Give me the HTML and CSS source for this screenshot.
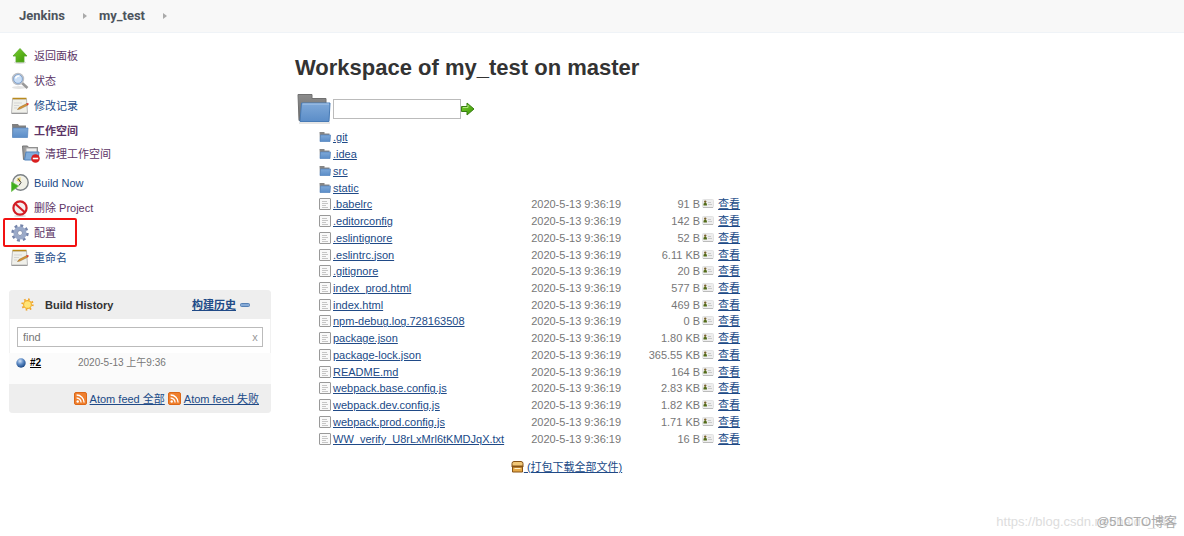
FILE: index.html
```html
<!DOCTYPE html>
<html lang="zh-CN">
<head>
<meta charset="utf-8">
<title>my_test - Jenkins</title>
<link rel="stylesheet" href="styles.css">
</head>
<body>
<svg class="defs" width="0" height="0" aria-hidden="true">
  <defs>
    <linearGradient id="blue" x1="0" y1="0" x2="0" y2="1"><stop offset="0" stop-color="#7fa9d8"/><stop offset="1" stop-color="#5b8dc8"/></linearGradient>
    <linearGradient id="grey" x1="0" y1="0" x2="0" y2="1"><stop offset="0" stop-color="#8c8c8c"/><stop offset="1" stop-color="#6b6b6b"/></linearGradient>
    <linearGradient id="green" x1="0" y1="0" x2="1" y2="1"><stop offset="0" stop-color="#7bd030"/><stop offset="1" stop-color="#3c9606"/></linearGradient>
    <radialGradient id="ball" cx=".4" cy=".3" r=".7"><stop offset="0" stop-color="#d4e4f8"/><stop offset=".5" stop-color="#5b89c4"/><stop offset="1" stop-color="#1d4a86"/></radialGradient>
    <symbol id="folder" viewBox="0 0 34 32"><path d="M1 1.500h14v4h14v22H2z" fill="url(#grey)" stroke="#707070"/><path d="M4.500 10h28.500l-1 18.500H3z" fill="url(#blue)" stroke="#477ab5"/><path d="M5.500 11h26.500" stroke="#a9c7ea"/><path d="M2 30h31" stroke="#ccc"/></symbol>
    <symbol id="notepad" viewBox="0 0 18 18"><path d="M1.500 2h14l1 14H.5z" fill="#f0f0ea" stroke="#bbb"/><path d="M1.500 1.500h14" stroke="#b98a1d" stroke-width="1.500"/><path d="M3 6h8M3 8.500h5M3 11h3" stroke="#d5d5d5"/><path d="M.5 16.500h16" stroke="#999"/><path d="M6.500 12.500l1.500-2 8-4 .8 1.600-8 4z" fill="#e09a35" stroke="#83591b" stroke-width=".5"/><path d="M15.500 6.500l1.800-.5.4 1.500-1.300.7z" fill="#d33"/></symbol>
    <symbol id="smallfolder" viewBox="0 0 12 12"><path d="M.5 1h5v1.500h5V10H1z" fill="#858585"/><path d="M1.500 4h10l-.5 6.500H1z" fill="url(#blue)" stroke="#5283bd" stroke-width=".7"/></symbol>
    <symbol id="doc" viewBox="0 0 12 12"><rect x=".5" y=".5" width="11" height="11" rx=".5" fill="#f9f9f9" stroke="#999"/><path d="M3 3.500h5M3 5.500h6M3 7.500h4M3 9.500h6" stroke="#c5c5c5"/></symbol>
    <symbol id="card" viewBox="0 0 12 9"><rect x=".5" y=".5" width="11" height="8" rx="1" fill="#eee" stroke="#e2e2e2"/><path d="M1 8.500h10" stroke="#bbb"/><circle cx="3.200" cy="2.600" r="1.200" fill="#7a612c"/><path d="M1.500 6.500V4.800l1.700-1.500 1.700 1.500v1.700z" fill="#526b18"/><path d="M6 3.500h3M6 5.500h4" stroke="#bbb" stroke-width=".7"/></symbol>
    <symbol id="rss" viewBox="0 0 13 13"><rect x=".5" y=".5" width="12" height="12" rx="1.500" fill="#ef7f2e" stroke="#dc6818"/><circle cx="3.700" cy="9.500" r="1.200" fill="#fff"/><path d="M2.600 6a4.500 4.500 0 0 1 4.500 4.500M2.600 3a7.500 7.500 0 0 1 7.500 7.500" fill="none" stroke="#fff" stroke-width="1.300"/></symbol>
  </defs>
</svg>

<header class="crumbs">
  <a href="#">Jenkins</a><svg class="chev" viewBox="0 0 4 6"><path d="M0 0l4 3-4 3z"/></svg>
  <a href="#">my_test</a><svg class="chev" viewBox="0 0 4 6"><path d="M0 0l4 3-4 3z"/></svg>
</header>

<div class="page">
  <aside class="side">
    <nav class="tasks">
      <a class="task visited" href="#"><svg viewBox="0 0 18 18"><ellipse cx="9" cy="15.500" rx="6" ry="1.500" fill="#ddd"/><path d="M9 1.500l7 7.500h-3v6H5V9H2z" fill="url(#green)" stroke="#58a828" stroke-width=".8"/></svg>返回面板</a>
      <a class="task visited" href="#"><svg viewBox="0 0 18 18"><ellipse cx="8" cy="15.500" rx="7" ry="1.500" fill="#e3e3e3"/><path d="M11 11l5.500 5" stroke="#999" stroke-width="2.600"/><circle cx="7" cy="7" r="5.300" fill="#c9def6" stroke="#bcbfc5" stroke-width="1.800"/><circle cx="7" cy="7" r="4.400" fill="none" stroke="#729cd0" stroke-width=".8"/><path d="M4.500 6.500q1-3 4-2.500" stroke="#fff" stroke-width="1.500" fill="none"/></svg>状态</a>
      <a class="task" href="#"><svg viewBox="0 0 18 18"><use href="#notepad"/></svg>修改记录</a>
      <a class="task visited current" href="#"><svg viewBox="0 0 18 18"><path d="M1 2h6l1 1.500h7v11H1.500z" fill="#808080"/><path d="M2 6h15l-.5 9.500H1.500z" fill="url(#blue)" stroke="#5283bd" stroke-width=".7"/></svg>工作空间</a>
      <a class="task visited sub" href="#"><svg viewBox="0 0 18 18"><path d="M.5 1h5l1 1.500h9v12H1.500z" fill="#9a9a9a" stroke="#777"/><path d="M4 3h11v7H4z" fill="#eee" stroke="#aaa"/><path d="M4 7h13l-1 8H2.500z" fill="#80acdb" stroke="#5484bb"/><circle cx="13.500" cy="13.500" r="4.300" fill="#d91f20"/><path d="M10.800 13.500h5.400" stroke="#fff" stroke-width="1.600"/></svg>清理工作空间</a>
      <a class="task" href="#"><svg viewBox="0 0 18 18"><circle cx="9.500" cy="8.500" r="7.700" fill="#f1f1e7" stroke="#7c8286" stroke-width="1.400"/><path d="M9.500 3v5.500l-4-2q1-3 4-3.500z" fill="#ecd067"/><path d="M7 4.500l3 4-2 3" stroke="#444" fill="none"/><path d="M.5 8l7 4-7 5.500z" fill="#3fae1c" stroke="#6cc04c" stroke-width=".7"/></svg>Build Now</a>
      <a class="task visited" href="#"><svg viewBox="0 0 18 18"><ellipse cx="9" cy="17" rx="6" ry="1" fill="#ddd"/><circle cx="9" cy="9" r="6.600" fill="#f5eded" stroke="#d31c24" stroke-width="2.200"/><path d="M4.500 5l9 8" stroke="#d31c24" stroke-width="2.200"/></svg>删除 Project</a>
      <a class="task visited marked" href="#"><svg viewBox="0 0 18 18"><circle cx="9" cy="9" r="7.200" fill="none" stroke="#7484aa" stroke-width="3" stroke-dasharray="2.830"/><circle cx="9" cy="9" r="4.600" fill="none" stroke="#9aa9c8" stroke-width="4"/><circle cx="9" cy="9" r="2.500" fill="#fff" stroke="#6b7b9f" stroke-width=".8"/></svg>配置</a>
      <a class="task" href="#"><svg viewBox="0 0 18 18"><use href="#notepad"/></svg>重命名</a>
    </nav>

    <section class="history">
      <div class="history-head">
        <svg class="sun" viewBox="0 0 12 12"><circle cx="6" cy="6" r="4.800" fill="none" stroke="#f0a52b" stroke-width="1.800" stroke-dasharray="1.500 2.270"/><circle cx="6" cy="6" r="3.600" fill="#ffe478" stroke="#f0ad2c"/></svg>
        <h2>Build History</h2>
        <a class="trend" href="#">构建历史</a>
        <svg class="minus" viewBox="0 0 10 4"><rect x=".5" y=".5" width="9" height="3" rx="1" fill="#86aad6" stroke="#5681b5"/></svg>
      </div>
      <div class="find">
        <input type="text" placeholder="find" aria-label="find"><button type="button" aria-label="clear">x</button>
      </div>
      <div class="build">
        <svg viewBox="0 0 10 10"><circle cx="5" cy="5" r="4.700" fill="url(#ball)"/></svg>
        <a href="#">#2</a><span>2020-5-13 上午9:36</span>
      </div>
      <div class="feeds">
        <svg viewBox="0 0 13 13"><use href="#rss"/></svg><a href="#">Atom feed 全部</a>
        <svg viewBox="0 0 13 13"><use href="#rss"/></svg><a href="#">Atom feed 失败</a>
      </div>
    </section>
  </aside>

  <main class="main">
    <h1>Workspace of my_test on master</h1>
    <form class="path">
      <svg class="big" viewBox="0 0 34 32"><use href="#folder"/></svg>
      <input type="text" aria-label="path">
      <button type="button" aria-label="go"><svg viewBox="0 0 14 14"><path d="M.5 4.500H6V1l7 6-7 6V9.500H.5z" fill="url(#green)" stroke="#387e13"/><path d="M2 5.500h5V3" fill="none" stroke="#b0e57e"/></svg></button>
    </form>
    <div class="listing">
    <table class="files">
      <tr><td><svg viewBox="0 0 12 12"><use href="#smallfolder"/></svg></td><td colspan="4"><a href="#">.git</a></td></tr>
      <tr><td><svg viewBox="0 0 12 12"><use href="#smallfolder"/></svg></td><td colspan="4"><a href="#">.idea</a></td></tr>
      <tr><td><svg viewBox="0 0 12 12"><use href="#smallfolder"/></svg></td><td colspan="4"><a href="#">src</a></td></tr>
      <tr><td><svg viewBox="0 0 12 12"><use href="#smallfolder"/></svg></td><td colspan="4"><a href="#">static</a></td></tr>
      <tr><td><svg viewBox="0 0 12 12"><use href="#doc"/></svg></td><td><a href="#">.babelrc</a></td><td class="date">2020-5-13 9:36:19</td><td class="size">91 B</td><td class="view"><svg viewBox="0 0 12 9"><use href="#card"/></svg><a href="#">查看</a></td></tr>
      <tr><td><svg viewBox="0 0 12 12"><use href="#doc"/></svg></td><td><a href="#">.editorconfig</a></td><td class="date">2020-5-13 9:36:19</td><td class="size">142 B</td><td class="view"><svg viewBox="0 0 12 9"><use href="#card"/></svg><a href="#">查看</a></td></tr>
      <tr><td><svg viewBox="0 0 12 12"><use href="#doc"/></svg></td><td><a href="#">.eslintignore</a></td><td class="date">2020-5-13 9:36:19</td><td class="size">52 B</td><td class="view"><svg viewBox="0 0 12 9"><use href="#card"/></svg><a href="#">查看</a></td></tr>
      <tr><td><svg viewBox="0 0 12 12"><use href="#doc"/></svg></td><td><a href="#">.eslintrc.json</a></td><td class="date">2020-5-13 9:36:19</td><td class="size">6.11 KB</td><td class="view"><svg viewBox="0 0 12 9"><use href="#card"/></svg><a href="#">查看</a></td></tr>
      <tr><td><svg viewBox="0 0 12 12"><use href="#doc"/></svg></td><td><a href="#">.gitignore</a></td><td class="date">2020-5-13 9:36:19</td><td class="size">20 B</td><td class="view"><svg viewBox="0 0 12 9"><use href="#card"/></svg><a href="#">查看</a></td></tr>
      <tr><td><svg viewBox="0 0 12 12"><use href="#doc"/></svg></td><td><a href="#">index_prod.html</a></td><td class="date">2020-5-13 9:36:19</td><td class="size">577 B</td><td class="view"><svg viewBox="0 0 12 9"><use href="#card"/></svg><a href="#">查看</a></td></tr>
      <tr><td><svg viewBox="0 0 12 12"><use href="#doc"/></svg></td><td><a href="#">index.html</a></td><td class="date">2020-5-13 9:36:19</td><td class="size">469 B</td><td class="view"><svg viewBox="0 0 12 9"><use href="#card"/></svg><a href="#">查看</a></td></tr>
      <tr><td><svg viewBox="0 0 12 12"><use href="#doc"/></svg></td><td><a href="#">npm-debug.log.728163508</a></td><td class="date">2020-5-13 9:36:19</td><td class="size">0 B</td><td class="view"><svg viewBox="0 0 12 9"><use href="#card"/></svg><a href="#">查看</a></td></tr>
      <tr><td><svg viewBox="0 0 12 12"><use href="#doc"/></svg></td><td><a href="#">package.json</a></td><td class="date">2020-5-13 9:36:19</td><td class="size">1.80 KB</td><td class="view"><svg viewBox="0 0 12 9"><use href="#card"/></svg><a href="#">查看</a></td></tr>
      <tr><td><svg viewBox="0 0 12 12"><use href="#doc"/></svg></td><td><a href="#">package-lock.json</a></td><td class="date">2020-5-13 9:36:19</td><td class="size">365.55 KB</td><td class="view"><svg viewBox="0 0 12 9"><use href="#card"/></svg><a href="#">查看</a></td></tr>
      <tr><td><svg viewBox="0 0 12 12"><use href="#doc"/></svg></td><td><a href="#">README.md</a></td><td class="date">2020-5-13 9:36:19</td><td class="size">164 B</td><td class="view"><svg viewBox="0 0 12 9"><use href="#card"/></svg><a href="#">查看</a></td></tr>
      <tr><td><svg viewBox="0 0 12 12"><use href="#doc"/></svg></td><td><a href="#">webpack.base.config.js</a></td><td class="date">2020-5-13 9:36:19</td><td class="size">2.83 KB</td><td class="view"><svg viewBox="0 0 12 9"><use href="#card"/></svg><a href="#">查看</a></td></tr>
      <tr><td><svg viewBox="0 0 12 12"><use href="#doc"/></svg></td><td><a href="#">webpack.dev.config.js</a></td><td class="date">2020-5-13 9:36:19</td><td class="size">1.82 KB</td><td class="view"><svg viewBox="0 0 12 9"><use href="#card"/></svg><a href="#">查看</a></td></tr>
      <tr><td><svg viewBox="0 0 12 12"><use href="#doc"/></svg></td><td><a href="#">webpack.prod.config.js</a></td><td class="date">2020-5-13 9:36:19</td><td class="size">1.71 KB</td><td class="view"><svg viewBox="0 0 12 9"><use href="#card"/></svg><a href="#">查看</a></td></tr>
      <tr><td><svg viewBox="0 0 12 12"><use href="#doc"/></svg></td><td><a href="#">WW_verify_U8rLxMrl6tKMDJqX.txt</a></td><td class="date">2020-5-13 9:36:19</td><td class="size">16 B</td><td class="view"><svg viewBox="0 0 12 9"><use href="#card"/></svg><a href="#">查看</a></td></tr>
    </table>
    <a class="zip" href="#"><svg viewBox="0 0 13 12"><path d="M1 5V2.500Q1 .5 3 .5h7q2 0 2 2V5z" fill="#f1c777" stroke="#875316"/><path d="M1.500 6h10v5h-10z" fill="#e5a948" stroke="#875316"/><path d="M.5 5.500h12" stroke="#875316"/><path d="M3.500 7.500h6" stroke="#fff0c6"/></svg> (打包下载全部文件)</a>
    </div>
  </main>
</div>
<div class="mark mark-url">https://blog.csdn.net/baidu_384</div>
<div class="mark mark-site">@51CTO博客</div>
</body>
</html>
```
FILE: styles.css
```css
body { margin: 0; background: #fff; color: #333; font: 11px/16px "Liberation Sans", "Noto Sans CJK SC", sans-serif; }
.defs { position: absolute; }
svg { flex: none; }
a { color: #204a87; }
input, button { font: inherit; box-sizing: border-box; }
button { padding: 0; border: 0; background: none; }

.crumbs { display: flex; align-items: center; height: 32px; padding-left: 19px; background: #f8f8f8; border-bottom: 1px solid #eff3f7; font: bold 13px/16px Roboto, sans-serif; }
.crumbs a { color: #4d545d; text-decoration: none; }
.chev { width: 4px; height: 6px; margin: 0 12px 0 18px; fill: #aaa; }

.page { display: flex; }
.side { flex: none; width: 262px; padding: 10px 0 0 9px; }
.tasks { display: flex; flex-direction: column; align-items: flex-start; }
.task { display: flex; align-items: center; gap: 5px; height: 25px; padding-left: 2px; text-decoration: none; }
.task svg { width: 18px; height: 18px; }
.visited { color: #5c3566; }
.current { font-weight: bold; }
.sub { height: 22px; margin-bottom: 5px; padding-left: 13px; }
.marked { position: relative; }
.marked::after { content: ""; position: absolute; inset: -2px -21px -2px -6px; border: 2px solid #f21111; border-radius: 2px; }

.history { margin-top: 20px; border-radius: 4px; overflow: hidden; background: #fff; box-shadow: inset 0 0 0 1px #f1f1f1; }
.history-head { display: flex; align-items: center; height: 29px; padding: 0 21px 0 12px; background: #eee; }
.sun { width: 13px; height: 13px; }
.history h2 { flex: 1; margin: 0 0 0 11px; font-size: 11px; line-height: 16px; }
.trend { font-weight: bold; }
.minus { width: 10px; height: 4px; margin-left: 4px; }
.find { display: flex; align-items: center; margin: 8px 8px 6px; border: 1px solid #bbb; }
.find input { flex: 1; min-width: 0; height: 18px; padding: 0 5px; border: 0; }
.find input::placeholder { color: #777; }
.find button { width: 14px; color: #999; }
.build { display: flex; align-items: center; height: 20px; padding: 0 7px 11px; background: #fbfbfb; }
.build svg { width: 10px; height: 10px; margin-right: 4px; }
.build a { width: 48px; color: #000; font-size: 10px; font-weight: bold; }
.build span { color: #777; font-size: 10px; }
.feeds { display: flex; align-items: center; justify-content: flex-end; gap: 3px; height: 29px; padding-right: 12px; background: #eee; }
.feeds svg { width: 13px; height: 13px; }

.main { flex: 1; padding: 21px 24px 0; }
h1 { margin: 0; color: #333; font-size: 22px; line-height: 28px; }
.path { display: flex; align-items: center; gap: 0; margin: 11px 0 4px 2px; }
.big { width: 34px; height: 32px; margin-right: 2px; }
.path input { width: 128px; height: 20px; border: 1px solid #bbb; }
.path button { width: 14px; height: 14px; }
.path button svg { display: block; width: 14px; height: 14px; }
.listing { display: flex; flex-direction: column; align-items: center; width: fit-content; margin-left: 24px; }
.files { height: 318px; border-collapse: collapse; line-height: 14px; }
.files td { padding: 0; white-space: nowrap; vertical-align: middle; }
.files td:first-child { width: 14px; }
.files svg { display: block; width: 12px; height: 12px; }
.files .date { padding-left: 27px; color: #777; }
.files .size { width: 79px; color: #777; text-align: right; }
.files .view { padding-left: 2px; }
.files .view svg { display: inline-block; width: 12px; height: 9px; margin-right: 4px; }
.zip { margin-top: 12px; padding-left: 74px; }
.zip svg { width: 13px; height: 12px; vertical-align: -2px; }

.mark { position: absolute; bottom: 6px; font-size: 13px; line-height: 16px; }
.mark-url { right: 7px; color: #ddd; }
.mark-site { right: 7px; color: #aaa; }
```
